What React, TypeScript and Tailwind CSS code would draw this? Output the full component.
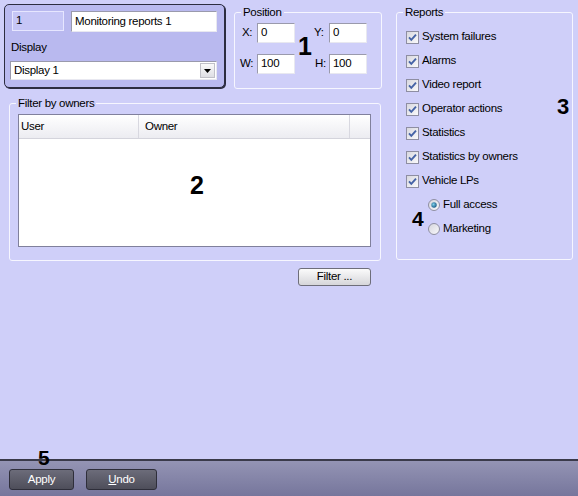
import type { ReactNode } from "react";

const FONT = "font-['Liberation_Sans',Arial,sans-serif]";

const REPORTS = [
  "System failures",
  "Alarms",
  "Video report",
  "Operator actions",
  "Statistics",
  "Statistics by owners",
  "Vehicle LPs",
];

function Group({ title, className, children }: { title: string; className: string; children: ReactNode }) {
  return (
    <fieldset className={`rounded-[3px] border border-[#f6f6ff] ${className}`}>
      <legend className="ml-[6px] px-[2px] text-[11.5px] leading-[12px] text-black">{title}</legend>
      {children}
    </fieldset>
  );
}

function TextBox({ value, className }: { value: string; className: string }) {
  return (
    <div
      className={`flex items-center border border-t-[#9a9aac] border-l-[#9a9aac] border-r-[#e8e8f0] border-b-[#e8e8f0] bg-white pl-[3px] text-[11.5px] text-black ${className}`}
    >
      {value}
    </div>
  );
}

function CheckBox() {
  return (
    <svg width="13" height="13" viewBox="0 0 13 13" className="shrink-0">
      <defs>
        <linearGradient id="cb" x1="0" y1="0" x2="1" y2="1">
          <stop offset="0" stopColor="#d6d6de" />
          <stop offset="1" stopColor="#fbfbfc" />
        </linearGradient>
      </defs>
      <rect x="0.5" y="0.5" width="12" height="12" fill="url(#cb)" stroke="#8e8ea2" />
      <path d="M3 6.3 L5.3 8.8 L10 3.6" fill="none" stroke="#4563a6" strokeWidth="1.9" />
    </svg>
  );
}

function Radio({ checked }: { checked?: boolean }) {
  return (
    <svg width="12" height="12" viewBox="0 0 12 12" className="shrink-0">
      <defs>
        <linearGradient id="rb" x1="0" y1="0" x2="1" y2="1">
          <stop offset="0" stopColor="#d4d4dc" />
          <stop offset="1" stopColor="#fafafc" />
        </linearGradient>
        <radialGradient id="rd" cx="0.4" cy="0.4" r="0.6">
          <stop offset="0" stopColor="#7fd0e8" />
          <stop offset="1" stopColor="#1c5f8c" />
        </radialGradient>
      </defs>
      <circle cx="6" cy="6" r="5.5" fill="url(#rb)" stroke="#8e8ea2" />
      {checked && <circle cx="6" cy="6" r="2.7" fill="url(#rd)" />}
    </svg>
  );
}

function GrayButton({ children, className }: { children: ReactNode; className: string }) {
  return (
    <button
      className={`flex items-center justify-center rounded-[3px] border border-[#2e2e3a] bg-gradient-to-b from-[#6c6c7a] to-[#4e4e5a] text-[11.5px] text-white ${className}`}
    >
      {children}
    </button>
  );
}

export default function App() {
  return (
    <div className={`relative flex h-[496px] w-[578px] flex-col overflow-hidden bg-[#cfcff9] tracking-[-0.3px] text-black ${FONT}`}>
      <div className="flex h-[459px] items-start">
        {/* Left column */}
        <div className="flex w-[390px] flex-col">
          <div className="flex items-start">
            {/* Object panel */}
            <div className="ml-[4px] mt-[4px] h-[84px] w-[221px] rounded-[5px] border border-[#2c2c40] bg-[#b9b9ef] shadow-[1px_1px_0_#2c2c40]">
              <div className="ml-[7px] mt-[6px] flex gap-[7px]">
                <div className="flex h-[20px] w-[52px] items-center border border-[#e6e6ff] bg-[#c6c6f6] pl-[3px] text-[11.5px]">
                  1
                </div>
                <TextBox value="Monitoring reports 1" className="h-[21px] w-[146px]" />
              </div>
              <div className="ml-[6px] mt-[8px] h-[15px] text-[11.5px] leading-[15px]">Display</div>
              <div className="ml-[5px] mt-[6px] flex h-[19px] w-[207px] items-center border border-t-[#9a9aac] border-l-[#9a9aac] border-r-[#e8e8f0] border-b-[#e8e8f0] bg-white pl-[3px] text-[11.5px]">
                <span className="flex-1">Display 1</span>
                <span className="mr-[1px] flex h-[15px] w-[15px] items-center justify-center border border-[#c0c0c8] bg-gradient-to-b from-[#fafafa] to-[#dedee4]">
                  <svg width="7" height="4" viewBox="0 0 7 4">
                    <path d="M0 0 H7 L3.5 4 Z" fill="#000" />
                  </svg>
                </span>
              </div>
            </div>

            {/* Position */}
            <Group title="Position" className="ml-[9px] mt-[6px] h-[83px] w-[148px]">
              <div className="mt-[5px] flex items-center">
                <span className="w-[22px] pl-[7px] text-[11.5px]">X:</span>
                <TextBox value="0" className="h-[20px] w-[38px]" />
                <span className="w-[34px] pl-[19px] text-[11.5px]">Y:</span>
                <TextBox value="0" className="h-[20px] w-[38px]" />
              </div>
              <div className="mt-[11px] flex items-center">
                <span className="w-[22px] pl-[5px] text-[11.5px]">W:</span>
                <TextBox value="100" className="h-[20px] w-[38px]" />
                <span className="w-[34px] pl-[20px] text-[11.5px]">H:</span>
                <TextBox value="100" className="h-[20px] w-[38px]" />
              </div>
            </Group>
          </div>

          {/* Filter by owners */}
          <Group title="Filter by owners" className="ml-[9px] mt-[8px] h-[164px] w-[372px]">
            <div className="ml-[8px] mt-[5px] flex h-[133px] w-[353px] flex-col border border-[#80809c] bg-white">
              <div className="flex h-[24px] border-b border-[#d4d4dc] bg-gradient-to-b from-[#ffffff] to-[#ececf1] text-[11.5px]">
                <div className="flex w-[120px] items-center border-r border-[#d8d8e0] pl-[2px]">User</div>
                <div className="flex w-[211px] items-center border-r border-[#d8d8e0] pl-[6px]">Owner</div>
                <div className="flex-1" />
              </div>
            </div>
          </Group>

          <button className="ml-[298px] mt-[7px] flex h-[18px] w-[73px] items-center justify-center rounded-[3px] border border-[#6e6e7a] bg-gradient-to-b from-[#fbfbfb] to-[#d6d6da] text-[11.5px]">
            Filter ...
          </button>
        </div>

        {/* Reports */}
        <Group title="Reports" className="ml-[6px] mt-[6px] h-[254px] w-[177px]">
          <div className="mt-[7px] flex flex-col pl-[9px] text-[11.5px]">
            {REPORTS.map((r) => (
              <label key={r} className="flex h-[24px] items-center gap-[3px]">
                <CheckBox />
                <span>{r}</span>
              </label>
            ))}
            <label className="flex h-[24px] items-center gap-[3px] pl-[22px]">
              <Radio checked />
              <span>Full access</span>
            </label>
            <label className="flex h-[24px] items-center gap-[3px] pl-[22px]">
              <Radio />
              <span>Marketing</span>
            </label>
          </div>
        </Group>
      </div>

      {/* Bottom bar */}
      <div className="flex h-[37px] items-start border-t-2 border-[#3a3a4a] bg-gradient-to-b from-[#9494b4] to-[#76769c]">
        <GrayButton className="ml-[9px] mt-[8px] h-[21px] w-[65px]">Apply</GrayButton>
        <GrayButton className="ml-[12px] mt-[8px] h-[21px] w-[71px]">
          <span className="underline">U</span>ndo
        </GrayButton>
      </div>

      {/* Callout numbers */}
      <span className="absolute left-[298px] top-[34px] text-[25px] font-bold leading-none tracking-normal">1</span>
      <span className="absolute left-[190px] top-[173px] text-[25px] font-bold leading-none tracking-normal">2</span>
      <span className="absolute left-[557px] top-[96px] text-[22px] font-bold leading-none tracking-normal">3</span>
      <span className="absolute left-[412px] top-[208px] text-[21px] font-bold leading-none tracking-normal">4</span>
      <span className="absolute left-[38px] top-[447px] text-[21px] font-bold leading-none tracking-normal">5</span>
    </div>
  );
}
